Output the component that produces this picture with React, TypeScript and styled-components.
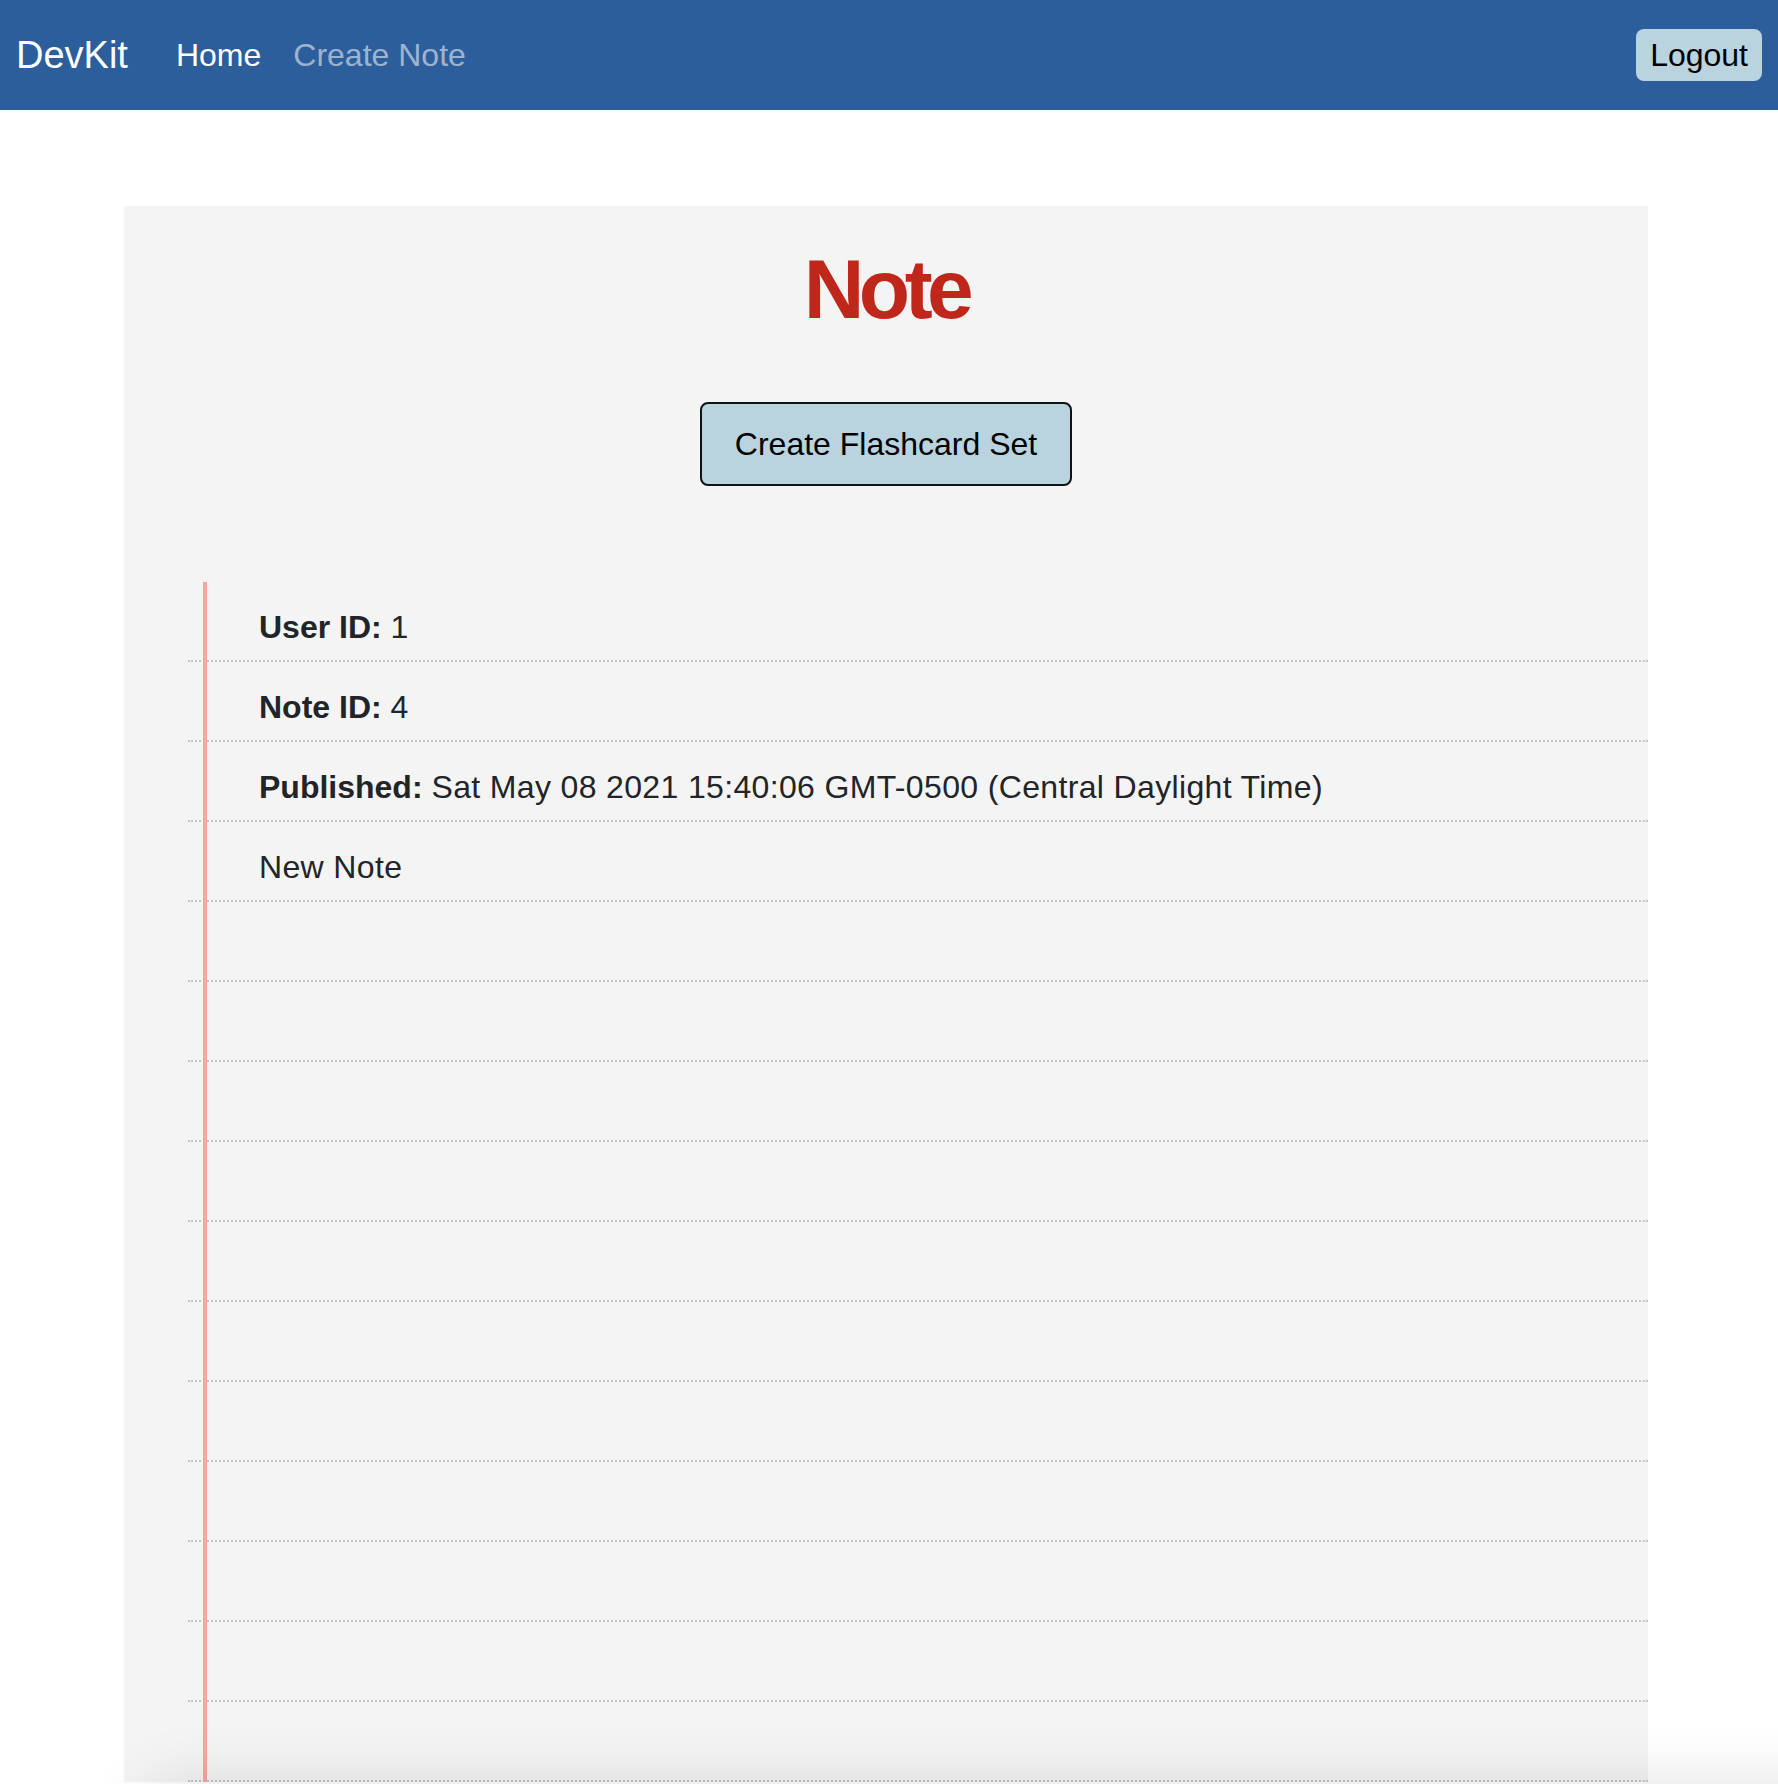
import React from 'react'
import styled, { createGlobalStyle } from 'styled-components'

const GlobalStyle = createGlobalStyle`
  html, body {
    margin: 0;
    padding: 0;
    background: #ffffff;
  }
  body {
    font-family: "Liberation Sans", Arial, Helvetica, sans-serif;
    color: #212529;
  }
  * {
    box-sizing: border-box;
  }
`

const NavBar = styled.nav`
  height: 110px;
  background: #2b5e9b;
  display: flex;
  align-items: center;
  padding: 0 16px 0 16px;
`

const Brand = styled.a`
  font-size: 38px;
  color: #ffffff;
  text-decoration: none;
  margin-right: 32px;
  line-height: 1.5;
`

const NavLinks = styled.div`
  display: flex;
  align-items: center;
`

const NavLink = styled.a<{ $active?: boolean }>`
  font-size: 32px;
  line-height: 1.5;
  padding: 0 16px;
  text-decoration: none;
  color: ${(p) => (p.$active ? '#ffffff' : 'rgba(255, 255, 255, 0.55)')};
`

const LogoutButton = styled.button`
  margin-left: auto;
  height: 52px;
  padding: 0 14px;
  border: none;
  border-radius: 8px;
  background: #b9d3df;
  color: #000000;
  font-family: inherit;
  font-size: 32px;
  line-height: 1;
`

const Main = styled.main`
  padding-top: 96px;
`

const Paper = styled.section`
  margin: 0 130px 0 124px;
  background: #f4f4f4;
  padding-top: 33px;
  display: flex;
  flex-direction: column;
  align-items: center;
`

const Title = styled.h1`
  margin: 0;
  font-size: 84px;
  line-height: 100px;
  font-weight: 700;
  color: #bf271b;
  letter-spacing: -5.5px;
`

const FlashcardButton = styled.button`
  margin-top: 63px;
  height: 84px;
  padding: 0 33px;
  border: 2px solid #111111;
  border-radius: 8px;
  background: #b9d3df;
  color: #000000;
  font-family: inherit;
  font-size: 32px;
  line-height: 1;
`

const Notebook = styled.div`
  position: relative;
  align-self: stretch;
  margin: 96px 0 0 64px;

  &::before {
    content: '';
    position: absolute;
    top: 0;
    bottom: 0;
    left: 15px;
    width: 4px;
    background: #f2a99d;
  }
`

const Line = styled.div`
  height: 80px;
  padding: 21px 0 0 71px;
  border-bottom: 2px dotted #c6c6c6;
  font-size: 32px;
  line-height: 48px;
  white-space: nowrap;
`

const Label = styled.strong`
  font-weight: 700;
`

const Value = styled.span`
  letter-spacing: 0.35px;
`

const BottomShade = styled.div`
  position: fixed;
  top: 100%;
  left: 150px;
  right: -200px;
  height: 100px;
  box-shadow: 0 0 64px rgba(0, 0, 0, 0.12);
  pointer-events: none;
`

const note = {
  userId: 1,
  noteId: 4,
  published: 'Sat May 08 2021 15:40:06 GMT-0500 (Central Daylight Time)',
  body: 'New Note',
}

const EMPTY_LINES = 11

function App() {
  return (
    <>
      <GlobalStyle />
      <NavBar>
        <Brand href="#">DevKit</Brand>
        <NavLinks>
          <NavLink href="#" $active>Home</NavLink>
          <NavLink href="#">Create Note</NavLink>
        </NavLinks>
        <LogoutButton>Logout</LogoutButton>
      </NavBar>

      <Main>
        <Paper>
          <Title>Note</Title>
          <FlashcardButton>Create Flashcard Set</FlashcardButton>

          <Notebook>
            <Line>
              <Label>User ID:</Label> <Value>{note.userId}</Value>
            </Line>
            <Line>
              <Label>Note ID:</Label> <Value>{note.noteId}</Value>
            </Line>
            <Line>
              <Label>Published:</Label> <Value>{note.published}</Value>
            </Line>
            <Line>
              <Value>{note.body}</Value>
            </Line>
            {Array.from({ length: EMPTY_LINES }).map((_, i) => (
              <Line key={i} />
            ))}
          </Notebook>
        </Paper>
      </Main>

      <BottomShade />
    </>
  )
}

export default App
